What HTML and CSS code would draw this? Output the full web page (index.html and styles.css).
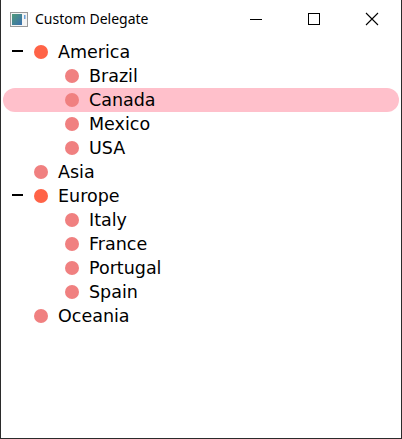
FILE: index.html
```html
<!DOCTYPE html>
<html>
<head>
<meta charset="utf-8">
<link rel="stylesheet" href="styles.css">
</head>
<body>
<div class="window">
  <div class="titlebar">
    <svg class="appicon" width="18" height="15" viewBox="0 0 18 15">
      <defs>
        <linearGradient id="g" x1="0" y1="0" x2="1" y2="1">
          <stop offset="0" stop-color="#4f9a7a"/>
          <stop offset="1" stop-color="#3a6fae"/>
        </linearGradient>
      </defs>
      <rect x="0.5" y="0.5" width="17" height="14" fill="#f4f4f4" stroke="#9a9a9a"/>
      <rect x="2" y="2" width="10" height="11" fill="url(#g)"/>
      <rect x="14" y="3" width="1.5" height="4" fill="#6aa0d8"/>
    </svg>
    <span class="title">Custom Delegate</span>
    <div class="controls">
      <div class="ctl">
        <svg width="14" height="14" viewBox="0 0 14 14"><line x1="1" y1="7.5" x2="13" y2="7.5" stroke="#000" stroke-width="1"/></svg>
      </div>
      <div class="ctl">
        <svg width="14" height="14" viewBox="0 0 14 14"><rect x="1.5" y="1.5" width="11" height="11" fill="none" stroke="#000" stroke-width="1"/></svg>
      </div>
      <div class="ctl">
        <svg width="14" height="14" viewBox="0 0 14 14"><path d="M1 1 L13 13 M13 1 L1 13" stroke="#000" stroke-width="1.1" fill="none"/></svg>
      </div>
    </div>
  </div>
  <div class="tree">
    <div class="row parent"><span class="toggle"><span class="dash"></span></span><span class="dot strong"></span><span class="label">America</span></div>
    <div class="row child"><span class="dot"></span><span class="label">Brazil</span></div>
    <div class="row child selected"><span class="dot"></span><span class="label">Canada</span></div>
    <div class="row child"><span class="dot"></span><span class="label">Mexico</span></div>
    <div class="row child"><span class="dot"></span><span class="label">USA</span></div>
    <div class="row parent"><span class="toggle"></span><span class="dot"></span><span class="label">Asia</span></div>
    <div class="row parent"><span class="toggle"><span class="dash"></span></span><span class="dot strong"></span><span class="label">Europe</span></div>
    <div class="row child"><span class="dot"></span><span class="label">Italy</span></div>
    <div class="row child"><span class="dot"></span><span class="label">France</span></div>
    <div class="row child"><span class="dot"></span><span class="label">Portugal</span></div>
    <div class="row child"><span class="dot"></span><span class="label">Spain</span></div>
    <div class="row parent"><span class="toggle"></span><span class="dot"></span><span class="label">Oceania</span></div>
  </div>
</div>
</body>
</html>
```
FILE: styles.css
```css
html, body {
  margin: 0;
  padding: 0;
  background: #ffffff;
}
.window {
  width: 400px;
  height: 438px;
  border-left: 1px solid #2b2b2b;
  border-right: 1px solid #2b2b2b;
  border-bottom: 1px solid #2b2b2b;
  background: #ffffff;
  overflow: hidden;
}
.titlebar {
  height: 39px;
  display: flex;
  align-items: center;
  padding-left: 9px;
}
.appicon {
  display: block;
  margin-top: -1px;
}
.title {
  margin-left: 7px;
  font-family: "Noto Sans", sans-serif;
  font-size: 14px;
  color: #000;
  margin-top: -2px;
}
.controls {
  margin-left: auto;
  display: flex;
  height: 39px;
  align-self: flex-start;
}
.ctl {
  width: 58px;
  height: 39px;
  display: flex;
  align-items: center;
  justify-content: center;
  padding-bottom: 2px;
  box-sizing: border-box;
}
.ctl svg { display: block; }
.tree {
  font-family: "DejaVu Sans", sans-serif;
  font-size: 17.5px;
  color: #000;
  padding-top: 1px;
}
.row {
  height: 24px;
  display: flex;
  align-items: center;
  margin: 0 2px;
}
.row.parent { padding-left: 0; }
.row.child { padding-left: 62px; }
.row.selected {
  background: #ffc0cb;
  border-radius: 12px;
}
.toggle {
  width: 31px;
  height: 24px;
  position: relative;
  flex: none;
}
.dash {
  position: absolute;
  left: 9px;
  top: 10px;
  width: 11px;
  height: 2px;
  background: #000;
}
.dot {
  width: 14px;
  height: 14px;
  border-radius: 50%;
  background: #f08080;
  flex: none;
}
.dot.strong { background: #ff6347; }
.label {
  margin-left: 10px;
  line-height: 24px;
}
```
